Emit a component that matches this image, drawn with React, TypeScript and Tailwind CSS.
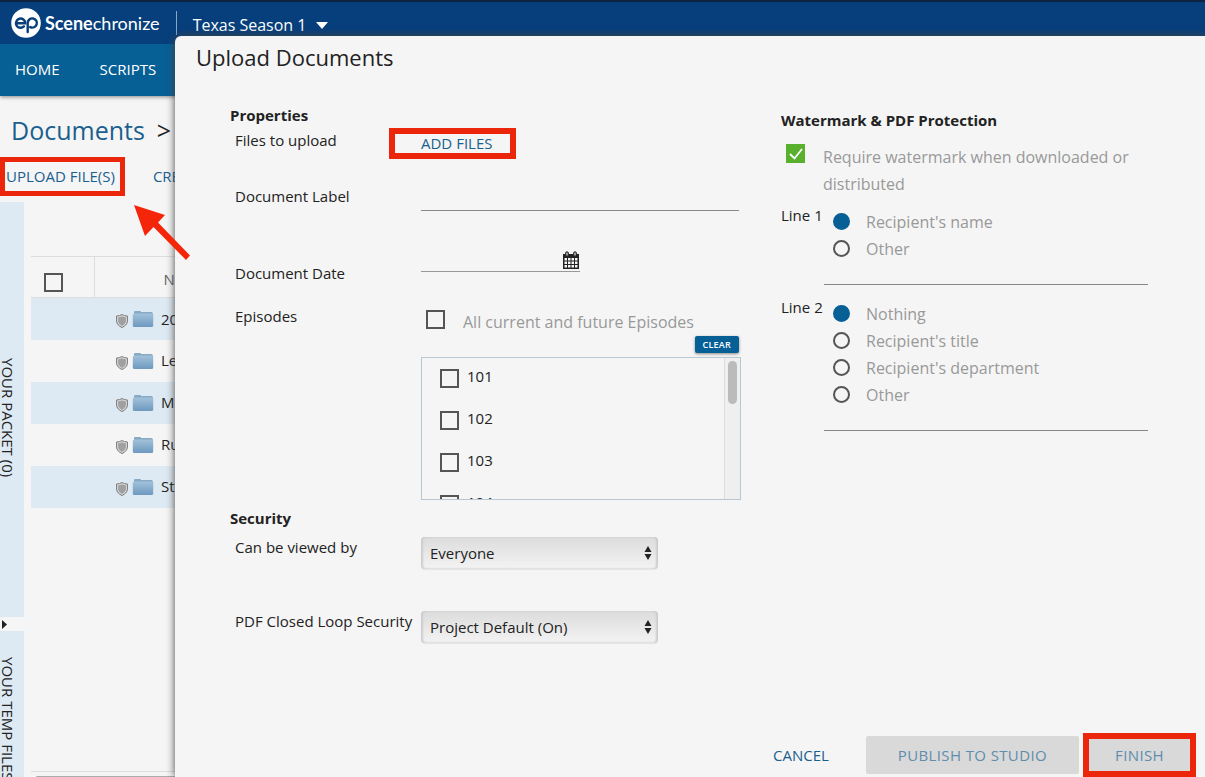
import { useState } from "react";
import type { ReactNode } from "react";

const FOLDERS = ["2020", "Legal", "Memos", "Rules", "Studio"];
const EPISODES = ["101", "102", "103", "104"];
const LINE_1 = ["Recipient's name", "Other"];
const LINE_2 = ["Nothing", "Recipient's title", "Recipient's department", "Other"];

const checkboxClass =
  "block size-[19px] shrink-0 appearance-none border-2 border-[#555] bg-[#f5f5f5]";

function Logo() {
  return (
    <div className="flex items-center gap-1 text-white">
      <svg viewBox="0 0 30 30" className="size-[30px]" aria-hidden="true">
        <circle cx="15" cy="15" r="14.8" fill="#fff" />
        <g fill="none" stroke="#063f7c" strokeWidth="2.4" strokeLinecap="round">
          <path d="M6 15.2H14.200A4.600 4.600 0 1 0 12.900 18.400" />
          <path d="M16.700 24V15a4.600 4.600 0 1 1 2.500 4.100" />
        </g>
      </svg>
      <span className="font-[Lato,sans-serif] text-lg leading-5">
        <b className="font-bold">Scene</b>chronize
      </span>
    </div>
  );
}

function ShieldIcon() {
  return (
    <svg viewBox="0 0 12 14" className="mt-1 h-[14px] w-3" aria-hidden="true">
      <path d="M6 .6C7.500 1.500 9.400 2 11.400 2V7c0 3-2.400 5.200-5.400 6.500C3 12.200.6 10 .6 7V2C2.600 2 4.500 1.500 6 .6Z" fill="#ddd" stroke="#777" />
      <path d="M6 2.200C7.200 2.900 8.500 3.200 9.900 3.300V7c0 2.200-1.700 3.800-3.900 4.900C3.800 10.800 2.100 9.200 2.100 7V3.300C3.500 3.200 4.800 2.900 6 2.200Z" fill="#a0a0a0" />
    </svg>
  );
}

function FolderIcon() {
  return (
    <svg viewBox="0 0 22 18" className="h-[18px] w-[22px]" aria-hidden="true">
      <defs>
        <linearGradient id="folder" x1="0" y1="0" x2="0" y2="1">
          <stop offset="0" stopColor="#a3c1da" />
          <stop offset="1" stopColor="#6d99bf" />
        </linearGradient>
      </defs>
      <path d="M2 4V2Q2 1 3 1h5q1 0 1 1h10q2 0 2 2v3H2Z" fill="#86a9c4" />
      <rect x=".8" y="3.500" width="20.400" height="13.500" rx="1.500" fill="url(#folder)" />
    </svg>
  );
}

function CalendarIcon() {
  return (
    <svg viewBox="0 0 18 18" className="size-[18px]" aria-hidden="true">
      <path d="M1 3h16v15H1Z" fill="#222" />
      <path d="M2.500 7h2.500v2.500H2.500ZM6 7h2.500v2.500H6ZM9.500 7H12v2.500H9.500ZM13 7h2.500v2.500H13ZM2.500 10.500h2.500V13H2.500ZM6 10.500h2.500V13H6ZM9.500 10.500H12V13H9.500ZM13 10.500h2.500V13H13ZM2.500 14h2.500v2.500H2.500ZM6 14h2.500v2.500H6ZM9.500 14H12v2.500H9.500ZM13 14h2.500v2.500H13Z" fill="#f5f5f5" />
      <rect x="3.500" y=".8" width="3" height="4.500" rx="1.500" fill="#999" stroke="#222" />
      <rect x="11.500" y=".8" width="3" height="4.500" rx="1.500" fill="#999" stroke="#222" />
    </svg>
  );
}

function FormRow({ label, htmlFor, className, children }: { label: string; htmlFor: string; className: string; children: ReactNode }) {
  return (
    <div className={`flex items-start ${className}`}>
      <label htmlFor={htmlFor} className="w-[191px] shrink-0 whitespace-nowrap pl-[5px]">
        {label}
      </label>
      {children}
    </div>
  );
}

function Select({ id, options }: { id: string; options: string[] }) {
  return (
    <div className="relative w-[237px]">
      <select
        id={id}
        className="block h-8 w-full appearance-none rounded-[4px] bg-linear-to-b from-[#dcdcdc] to-[#f3f3f3] px-[9px] text-[15px] shadow-[inset_2px_0_2px_#ccc,inset_-2px_0_2px_#ccc,0_1px_1px_#e4e4e4]"
      >
        {options.map((option) => (
          <option key={option}>{option}</option>
        ))}
      </select>
      <svg viewBox="0 0 8 14" className="pointer-events-none absolute right-[6px] top-[9px] h-[14px] w-2" aria-hidden="true">
        <path d="M4 0 7.500 6H.500ZM4 14 7.500 8H.500Z" fill="#222" />
      </svg>
    </div>
  );
}

function WatermarkLine({ label, name, options }: { label: string; name: string; options: string[] }) {
  const [value, setValue] = useState(options[0]);

  return (
    <fieldset className="flex">
      <legend className="float-left w-[43px] shrink-0 whitespace-nowrap">{label}</legend>
      <div className="min-w-0 flex-1 pt-[3px]">
        {options.map((option) => (
          <label key={option} className="flex h-[27px] items-center gap-4 pl-[9px] text-base text-[#999]">
            <input
              type="radio"
              name={name}
              checked={value === option}
              onChange={() => setValue(option)}
              className="size-[17px] appearance-none rounded-full border-2 border-[#555] checked:border-[#065f95] checked:bg-[#065f95]"
            />
            {option}
          </label>
        ))}
        <input aria-label={`${label} text`} className="block h-[23px] w-full border-b border-[#888] outline-none" />
      </div>
    </fieldset>
  );
}

function DocumentsPage() {
  return (
    <div className="flex h-full flex-col">
      <header className="shrink-0 text-white shadow-[0_1px_4px_#888]">
        <div className="flex h-11 items-center border-t-2 border-[#0d2440] bg-[#063f7c] pl-[11px]">
          <Logo />
          <span className="ml-4 h-6 w-px bg-[#8aa6c5]" />
          <button className="ml-4 mt-1 flex items-center gap-[10px] text-base">
            Texas Season 1
            <svg viewBox="0 0 12 7" className="h-[7px] w-3" aria-hidden="true">
              <path d="M0 0h12L6 7Z" fill="#fff" />
            </svg>
          </button>
        </div>
        <nav className="flex h-[52px] items-center gap-10 bg-[#065f95] px-[15px] pb-0.5 text-[15px]">
          <a href="#home">HOME</a>
          <a href="#scripts">SCRIPTS</a>
        </nav>
      </header>

      <h1 className="mt-4 flex shrink-0 gap-3 pl-[11px] text-[25px] leading-9">
        <a href="#documents" className="text-[#1a608f]">Documents</a>
        <span>&gt;</span>
      </h1>

      <div className="mt-[9px] flex shrink-0 items-center text-[15px] text-[#1a608f]">
        <button className="h-[39px] whitespace-nowrap border-[5px] border-[#ec260b] px-[1px] pr-[5px]">UPLOAD FILE(S)</button>
        <button className="ml-7 whitespace-nowrap">CREATE</button>
      </div>

      <div className="mt-[6px] flex min-h-0 flex-1">
        <aside className="flex w-6 shrink-0 flex-col overflow-hidden text-[15px] leading-4">
          <button className="flex h-[415px] w-6 shrink-0 items-center justify-center bg-[#deeaf3] pr-2 pt-4 [writing-mode:vertical-rl]">
            YOUR PACKET (0)
          </button>
          <svg viewBox="0 0 24 14" className="h-[14px] w-6 shrink-0" aria-hidden="true">
            <path d="M2 3v9l5-4.500Z" fill="#222" />
          </svg>
          <button className="w-6 flex-1 whitespace-nowrap bg-[#deeaf3] pr-2 pt-[26px] text-left [writing-mode:vertical-rl]">
            YOUR TEMP FILES
          </button>
        </aside>

        <main className="ml-[7px] flex min-w-0 flex-1 flex-col pt-[54px]">
          <table className="w-full border-collapse text-[15px]">
            <thead>
              <tr className="h-[41px] border-y border-[#ddd]">
                <th className="w-[63px] border-r border-[#ddd] pl-[13px] text-left">
                  <input type="checkbox" aria-label="Select all documents" className={`mt-[10px] ${checkboxClass}`} />
                </th>
                <th className="pl-[69px] pt-1 text-left font-normal text-[#666]">Name</th>
              </tr>
            </thead>
            <tbody>
              {FOLDERS.map((folder) => (
                <tr key={folder} className="odd:bg-[#deeaf3]">
                  <td colSpan={2} className="h-[42px] p-0">
                    <div className="flex items-center pl-[85px]">
                      <ShieldIcon />
                      <span className="ml-1"><FolderIcon /></span>
                      <span className="ml-[7px]">{folder}</span>
                    </div>
                  </td>
                </tr>
              ))}
            </tbody>
          </table>
          <div className="mt-auto h-[6px] border-t border-[#ddd] pl-[5px] pt-1">
            <div className="h-full rounded-tl bg-[#aaa]" />
          </div>
        </main>
      </div>
    </div>
  );
}

function UploadDialog() {
  return (
    <section
      role="dialog"
      aria-labelledby="upload-title"
      className="absolute bottom-0 left-[175px] right-0 top-9 flex flex-col rounded-tl-md bg-[#f5f5f5] shadow-[0_0_8px_#444]"
    >
      <h2 id="upload-title" className="pl-[21px] pt-[5px] text-[22px] leading-8">Upload Documents</h2>

      <div className="flex flex-1 gap-10 pl-[55px] pr-[57px] text-[15px] leading-5">
        <form className="w-[511px] shrink-0 pt-8">
          <h3 className="font-bold">Properties</h3>
          <FormRow label="Files to upload" htmlFor="add-files" className="h-14 pt-[5px]">
            <button
              id="add-files"
              type="button"
              className="-ml-8 -mt-0.5 h-[31px] border-[6px] border-[#ec260b] px-[18px] pl-[26px] leading-[19px] text-[#1a608f]"
            >
              ADD FILES
            </button>
          </FormRow>
          <FormRow label="Document Label" htmlFor="document-label" className="h-[77px] pt-[5px]">
            <input id="document-label" className="h-[25px] w-[318px] border-b border-[#888] outline-none" />
          </FormRow>
          <FormRow label="Document Date" htmlFor="document-date" className="h-[43px] pt-[5px]">
            <div className="-mt-[13px] flex w-[159px] border-b border-[#999] pb-[2px]">
              <input id="document-date" className="h-[19px] min-w-0 flex-1 outline-none" />
              <button type="button" aria-label="Pick a date"><CalendarIcon /></button>
            </div>
          </FormRow>
          <FormRow label="Episodes" htmlFor="all-episodes" className="pt-[5px]">
            <div className="w-[320px]">
              <label className="flex items-start gap-[18px] pl-[5px] text-base leading-8 text-[#999]">
                <input id="all-episodes" type="checkbox" className={`mt-1 ${checkboxClass}`} />
                All current and future Episodes
              </label>
              <div className="-mt-0.5 flex justify-end pr-[2px]">
                <button type="button" className="h-[17px] rounded-[2px] bg-[#065f95] px-2 text-[9px] font-semibold leading-[17px] tracking-wide text-white shadow-[0_1px_3px_#888]">
                  CLEAR
                </button>
              </div>
              <div className="mt-1 flex h-[143px] overflow-hidden border border-[#b7c7d4]">
                <div className="flex-1">
                  {EPISODES.map((episode) => (
                    <label key={episode} className="flex h-[42px] items-start gap-2 pl-[18px] pt-2">
                      <input type="checkbox" className={`mt-[3px] ${checkboxClass}`} />
                      {episode}
                    </label>
                  ))}
                </div>
                <div className="w-4 border-l border-[#ddd] bg-[#efefef] px-[3px] pt-[3px]">
                  <div className="h-[43px] rounded-full bg-[#bbb]" />
                </div>
              </div>
            </div>
          </FormRow>

          <h3 className="mt-2 font-bold">Security</h3>
          <FormRow label="Can be viewed by" htmlFor="viewed-by" className="h-[74px] pt-[9px]">
            <Select id="viewed-by" options={["Everyone", "Only me"]} />
          </FormRow>
          <FormRow label="PDF Closed Loop Security" htmlFor="closed-loop" className="pt-[9px]">
            <Select id="closed-loop" options={["Project Default (On)", "Off"]} />
          </FormRow>
        </form>

        <div className="min-w-0 flex-1 pt-[37px]">
          <h3 className="font-bold">Watermark &amp; PDF Protection</h3>
          <label className="mt-[14px] flex items-start gap-[18px] pl-[5px] text-base leading-[27px] text-[#999]">
            <span className="relative flex shrink-0">
              <input type="checkbox" defaultChecked className="peer size-[19px] appearance-none border-2 border-[#555] checked:border-0 checked:bg-[#58b02c]" />
              <svg viewBox="0 0 19 19" className="pointer-events-none invisible absolute inset-0 peer-checked:visible" aria-hidden="true">
                <path d="m4 10 4.500 4.500L16 5" fill="none" stroke="#fff" strokeWidth="1.800" />
              </svg>
            </span>
            Require watermark when downloaded or distributed
          </label>
          <div className="mt-[7px] flex flex-col gap-3">
            <WatermarkLine label="Line 1" name="line-1" options={LINE_1} />
            <WatermarkLine label="Line 2" name="line-2" options={LINE_2} />
          </div>
        </div>
      </div>

      <footer className="flex items-center justify-end pr-[9px] text-[15px] text-[#1a608f]">
        <button className="mr-[37px]">CANCEL</button>
        <button disabled className="mr-1 h-[38px] rounded-[2px] bg-[#d9d9d9] px-8 tracking-wide text-[#5f8dab]">PUBLISH TO STUDIO</button>
        <button disabled className="h-11 border-[6px] border-[#ec260b] bg-[#d9d9d9] px-[26px] tracking-wide text-[#5f8dab]">FINISH</button>
      </footer>
    </section>
  );
}

export default function App() {
  return (
    <div className="relative h-screen overflow-hidden bg-[#f5f5f5] font-['Open_Sans',sans-serif] text-[#222]">
      <DocumentsPage />
      <UploadDialog />
      <svg viewBox="0 0 56 55" className="pointer-events-none absolute left-[134px] top-[205px] h-[55px] w-14" aria-hidden="true">
        <path d="M0 0 31 10 24 17.500 56 50.500 52 55 19.500 22 11 31Z" fill="#f5250a" />
      </svg>
    </div>
  );
}
